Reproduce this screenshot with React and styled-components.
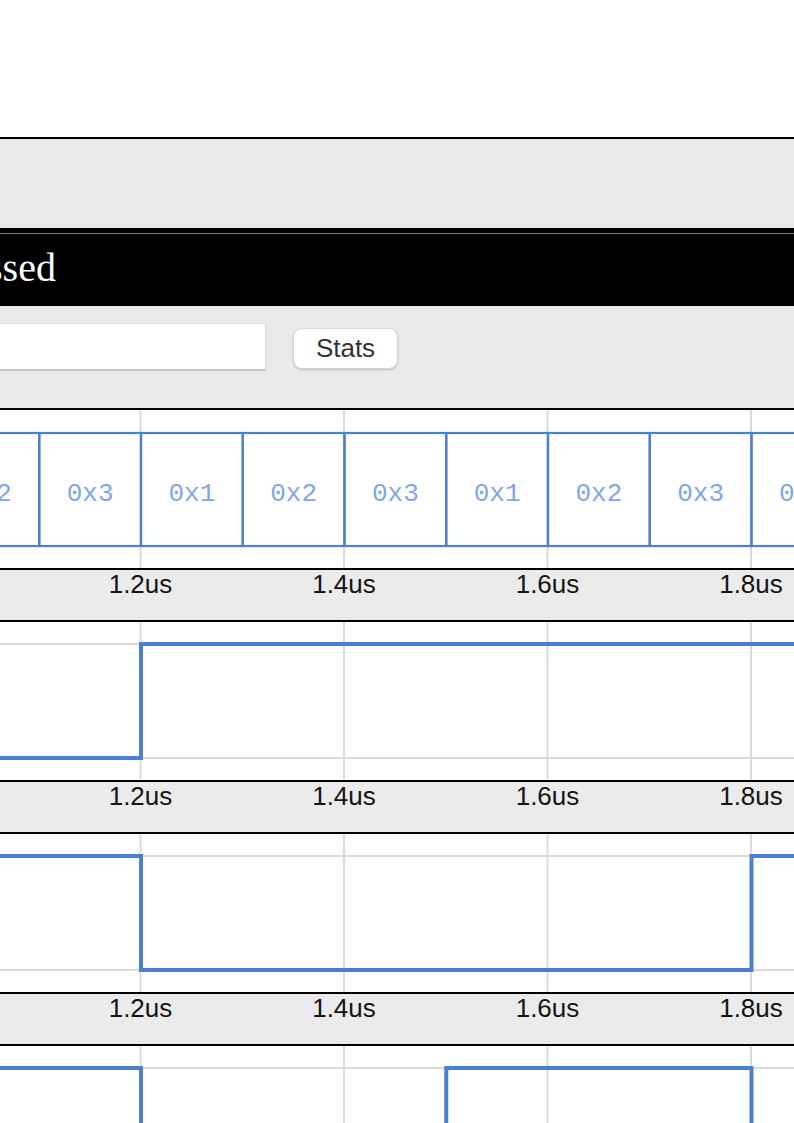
import React from "react";
import styled, { createGlobalStyle } from "styled-components";

const BLUE = "#4a7fd2";
const TEXT_BLUE = "#7ea7e4";
const GRID = "#dadada";
const ROW_H = 158;
const HIGH_Y = 22;
const LOW_Y = 136;

const timeToX = (t) => 140.5 + (t - 1.2) * 1017.5;

const GlobalStyle = createGlobalStyle`
  html, body {
    margin: 0;
    padding: 0;
    overflow: hidden;
    background: #ffffff;
  }
  body {
    font-family: "Liberation Sans", Arial, sans-serif;
  }
`;

const Page = styled.div`
  width: 794px;
  height: 1123px;
  overflow: hidden;
  padding-top: 137px;
  box-sizing: border-box;
`;

const Toolbar = styled.div`
  height: 89px;
  border-top: 2px solid #000;
  background: #eaeaea;
`;

const Header = styled.div`
  height: 78px;
  box-sizing: border-box;
  padding-top: 13px;
  border-top: 5px solid #000;
  background: #000;
  box-shadow: inset 0 1px 0 #7e7e7e;
  overflow: hidden;
  white-space: nowrap;
`;

const Title = styled.h1`
  margin: 0 0 0 -53px;
  color: #fff;
  font-family: "Liberation Serif", "Times New Roman", serif;
  font-weight: normal;
  font-size: 40px;
  line-height: 44px;
`;

const Controls = styled.div`
  height: 102px;
  box-sizing: border-box;
  padding-top: 17px;
  display: flex;
  align-items: flex-start;
  gap: 27px;
  background: #eaeaea;
`;

const FilterInput = styled.input`
  width: 266px;
  height: 48px;
  box-sizing: border-box;
  border: 1px solid #dcdcdc;
  border-left: none;
  border-bottom: 2px solid #c6c6c6;
  background: #fff;
  font-size: 24px;
  outline: none;
  padding: 0 8px;
`;

const StatsButton = styled.button`
  margin-top: 5px;
  width: 105px;
  height: 41px;
  padding: 0;
  border: 1px solid #d6d6d6;
  border-radius: 9px;
  background: #fff;
  box-shadow: 0 1px 2px rgba(0, 0, 0, 0.2);
  color: #333;
  font-family: "Liberation Sans", Arial, sans-serif;
  font-size: 26px;
`;

const Waveforms = styled.div`
  border-top: 2px solid #000;
`;

const TraceSvg = styled.svg`
  display: block;
  width: 794px;
  height: ${ROW_H}px;
`;

const AxisBand = styled.div`
  position: relative;
  height: 50px;
  border-top: 2px solid #000;
  border-bottom: 2px solid #000;
  background: #ebebeb;
  overflow: hidden;
`;

const AxisLabel = styled.span`
  position: absolute;
  top: -1px;
  transform: translateX(-50%);
  font-size: 26px;
  line-height: 30px;
  color: #141414;
  white-space: nowrap;
`;

const GRID_TIMES = [1.0, 1.2, 1.4, 1.6, 1.8, 2.0];

const BUS = [
  [1.0, "0x2"],
  [1.1, "0x3"],
  [1.2, "0x1"],
  [1.3, "0x2"],
  [1.4, "0x3"],
  [1.5, "0x1"],
  [1.6, "0x2"],
  [1.7, "0x3"],
  [1.8, "0x1"],
  [1.9, "0x2"],
];

const SIGNALS = [
  [[0.9, 0], [1.2, 1]],
  [[0.9, 1], [1.2, 0], [1.8, 1]],
  [[0.9, 1], [1.2, 0], [1.5, 1], [1.8, 0]],
  [[0.9, 0], [1.4, 1]],
];

function Grid({ horizontal }) {
  return (
    <g stroke={GRID} strokeWidth="2">
      {horizontal && (
        <>
          <line x1="0" x2="794" y1={HIGH_Y} y2={HIGH_Y} />
          <line x1="0" x2="794" y1={LOW_Y} y2={LOW_Y} />
        </>
      )}
      {GRID_TIMES.map((t) => (
        <line key={t} x1={timeToX(t)} x2={timeToX(t)} y1="0" y2={ROW_H} />
      ))}
    </g>
  );
}

function BusTrace() {
  return (
    <TraceSvg viewBox={`0 0 794 ${ROW_H}`}>
      <Grid />
      {BUS.map(([t, v]) => {
        const x0 = timeToX(t) + 0.5;
        const x1 = timeToX(t + 0.1) + 0.5;
        return (
          <g key={t}>
            <rect
              x={x0}
              y={HIGH_Y + 1}
              width={x1 - x0}
              height={LOW_Y - HIGH_Y - 1}
              fill="none"
              stroke={BLUE}
              strokeWidth="2.2"
            />
            <text
              x={(x0 + x1) / 2}
              y="91"
              textAnchor="middle"
              fontFamily='"Liberation Mono", "Courier New", monospace'
              fontSize="26"
              fill={TEXT_BLUE}
            >
              {v}
            </text>
          </g>
        );
      })}
    </TraceSvg>
  );
}

function BitTrace({ steps }) {
  const pts = [];
  steps.forEach(([t, v], i) => {
    const x = i === 0 ? -10 : timeToX(t) + 0.5;
    const y = v ? HIGH_Y : LOW_Y;
    if (i > 0) {
      const prevY = steps[i - 1][1] ? HIGH_Y : LOW_Y;
      pts.push(`${x},${prevY}`);
    }
    pts.push(`${x},${y}`);
  });
  const last = steps[steps.length - 1][1] ? HIGH_Y : LOW_Y;
  pts.push(`810,${last}`);
  return (
    <TraceSvg viewBox={`0 0 794 ${ROW_H}`}>
      <Grid horizontal />
      <polyline
        points={pts.join(" ")}
        fill="none"
        stroke={BLUE}
        strokeWidth="4"
        strokeLinejoin="miter"
      />
    </TraceSvg>
  );
}

function TimeAxis() {
  return (
    <AxisBand>
      {GRID_TIMES.map((t) => (
        <AxisLabel key={t} style={{ left: `${timeToX(t)}px` }}>
          {t.toFixed(1)}us
        </AxisLabel>
      ))}
    </AxisBand>
  );
}

export default function App() {
  return (
    <>
      <GlobalStyle />
      <Page>
        <Toolbar />
        <Header>
          <Title>Passed</Title>
        </Header>
        <Controls>
          <FilterInput type="text" aria-label="Filter" />
          <StatsButton type="button">Stats</StatsButton>
        </Controls>
        <Waveforms>
          <BusTrace />
          {SIGNALS.map((steps, i) => (
            <React.Fragment key={i}>
              <TimeAxis />
              <BitTrace steps={steps} />
            </React.Fragment>
          ))}
        </Waveforms>
      </Page>
    </>
  );
}
